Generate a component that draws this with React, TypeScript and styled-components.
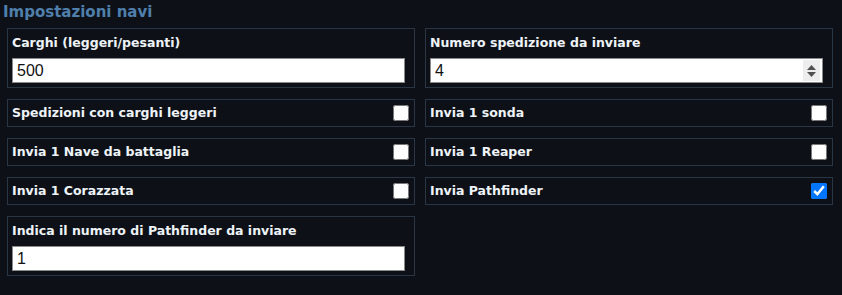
import React from "react";
import styled, { createGlobalStyle } from "styled-components";

const GlobalStyle = createGlobalStyle`
  html, body {
    margin: 0;
    padding: 0;
    background: #0d1117;
  }
  body {
    font-family: "DejaVu Sans", Verdana, sans-serif;
  }
`;

const Page = styled.div`
  width: 842px;
  height: 295px;
  background: #0d1117;
  box-sizing: border-box;
  padding: 2px 0 0 0;
`;

const Title = styled.h3`
  margin: 0 0 5px 3px;
  font-family: "DejaVu Sans", Verdana, sans-serif;
  font-size: 15px;
  line-height: 21px;
  font-weight: bold;
  color: #4f7fac;
`;

const Grid = styled.div`
  display: grid;
  grid-template-columns: 408px 408px;
  column-gap: 10px;
  row-gap: 11px;
  padding-left: 7px;
`;

const FieldCard = styled.div`
  display: flex;
  flex-direction: column;
  box-sizing: border-box;
  height: 60px;
  border: 1px solid #2a3644;
  padding: 6px 4px 4px 4px;
`;

const Label = styled.label`
  font-family: "DejaVu Sans", Verdana, sans-serif;
  font-size: 12.5px;
  line-height: 16px;
  font-weight: bold;
  color: #eef3f8;
  white-space: nowrap;
`;

const InputWrap = styled.div`
  position: relative;
  margin-top: 7px;
  width: 393px;
  height: 25px;
`;

const TextInput = styled.input`
  box-sizing: border-box;
  width: 100%;
  height: 100%;
  margin: 0;
  padding: 1px 4px 0 4px;
  border: 1px solid #8a8a8a;
  border-radius: 0;
  background: #ffffff;
  color: #111;
  font-family: "Liberation Sans", Arial, sans-serif;
  font-size: 16px;
  outline: none;
  caret-color: #000;
  -moz-appearance: textfield;
  &::-webkit-inner-spin-button,
  &::-webkit-outer-spin-button {
    -webkit-appearance: none;
    margin: 0;
  }
`;

const Spinner = styled.span`
  position: absolute;
  top: 2px;
  right: 3px;
  width: 17px;
  height: 21px;
  background: #ededed;
  display: flex;
  flex-direction: column;
  align-items: center;
  justify-content: center;
  gap: 2px;
  pointer-events: none;
`;

const CheckRow = styled.div`
  display: flex;
  align-items: center;
  justify-content: space-between;
  box-sizing: border-box;
  height: 28px;
  border: 1px solid #2a3644;
  padding: 0 4px 0 4px;
`;

const Check = styled.input`
  margin: 0 1px 0 0;
  width: 16px;
  height: 16px;
  accent-color: #0075ff;
`;

type FieldProps = { label: string; value: string; number?: boolean };

const Field: React.FC<FieldProps> = ({ label, value, number }) => (
  <FieldCard>
    <Label>{label}</Label>
    <InputWrap>
      <TextInput
        type={number ? "number" : "text"}
        defaultValue={value}
        autoFocus={number}
      />
      {number && (
        <Spinner>
          <svg width="9" height="5" viewBox="0 0 9 5">
            <path d="M4.5 0 L9 5 L0 5 Z" fill="#505050" />
          </svg>
          <svg width="9" height="5" viewBox="0 0 9 5">
            <path d="M0 0 L9 0 L4.5 5 Z" fill="#505050" />
          </svg>
        </Spinner>
      )}
    </InputWrap>
  </FieldCard>
);

type CheckProps = { label: string; checked?: boolean };

const CheckField: React.FC<CheckProps> = ({ label, checked }) => (
  <CheckRow>
    <Label>{label}</Label>
    <Check type="checkbox" defaultChecked={checked} />
  </CheckRow>
);

export default function App() {
  return (
    <Page>
      <GlobalStyle />
      <Title>Impostazioni navi</Title>
      <Grid>
        <Field label="Carghi (leggeri/pesanti)" value="500" />
        <Field label="Numero spedizione da inviare" value="4" number />
        <CheckField label="Spedizioni con carghi leggeri" />
        <CheckField label="Invia 1 sonda" />
        <CheckField label="Invia 1 Nave da battaglia" />
        <CheckField label="Invia 1 Reaper" />
        <CheckField label="Invia 1 Corazzata" />
        <CheckField label="Invia Pathfinder" checked />
        <Field label="Indica il numero di Pathfinder da inviare" value="1" />
      </Grid>
    </Page>
  );
}
